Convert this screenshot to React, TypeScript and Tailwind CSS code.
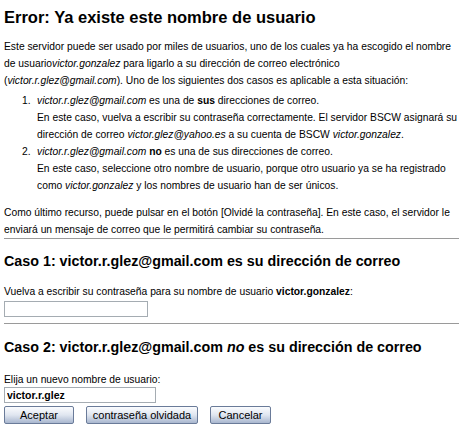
import React from "react";

const FONT = { fontFamily: '"Liberation Sans", Arial, sans-serif' };

function Button({ label, w }: { label: string; w: string }) {
  return (
    <button
      type="button"
      className={`${w} h-[18px] rounded-[2px] border border-[#6a7b99] bg-gradient-to-b from-[#fbfcfe] via-[#e0e6f0] to-[#a9b7cf] text-[11px] leading-[16px] text-black`}
    >
      {label}
    </button>
  );
}

export default function App() {
  return (
    <div className="h-[428px] w-[463px] overflow-hidden bg-white pl-[4px] pr-[2px] text-[10.3px] leading-[17px] text-black" style={FONT}>
      <h1 className="mt-[7px] text-[16.5px] font-bold leading-[20px]">
        Error: Ya existe este nombre de usuario
      </h1>

      <p className="mt-[11px]">
        Este servidor puede ser usado por miles de usuarios, uno de los cuales ya ha escogido el nombre de usuario
        <i>victor.gonzalez</i> para ligarlo a su dirección de correo electrónico (<i>victor.r.glez@gmail.com</i>). Uno de
        los siguientes dos casos es aplicable a esta situación:
      </p>

      <ol className="mt-[3px] pl-[33px]">
        <li className="flex">
          <span className="-ml-[15px] w-[15px] shrink-0">1.</span>
          <div>
            <i>victor.r.glez@gmail.com</i> es una de <b>sus</b> direcciones de correo.
            <br />
            En este caso, vuelva a escribir su contraseña correctamente. El servidor BSCW asignará su dirección de correo{" "}
            <i>victor.glez@yahoo.es</i> a su cuenta de BSCW <i>victor.gonzalez</i>.
          </div>
        </li>
        <li className="flex">
          <span className="-ml-[15px] w-[15px] shrink-0">2.</span>
          <div>
            <i>victor.r.glez@gmail.com</i> <b>no</b> es una de sus direcciones de correo.
            <br />
            En este caso, seleccione otro nombre de usuario, porque otro usuario ya se ha registrado como{" "}
            <i>victor.gonzalez</i> y los nombres de usuario han de ser únicos.
          </div>
        </li>
      </ol>

      <p className="mt-[10px]">
        Como último recurso, puede pulsar en el botón [Olvidé la contraseña]. En este caso, el servidor le enviará un
        mensaje de correo que le permitirá cambiar su contraseña.
      </p>

      <hr className="mr-[2px] mt-0 border-t border-[#9a9a9a]" />

      <h2 className="mt-[14px] text-[14.3px] font-bold leading-[17px]">
        Caso 1: victor.r.glez@gmail.com es su dirección de correo
      </h2>
      <div className="mt-[15px] leading-[14px]">
        Vuelva a escribir su contraseña para su nombre de usuario <b>victor.gonzalez</b>:
      </div>
      <input
        type="password"
        className="mt-[2px] block h-[16px] w-[144px] border border-[#a5acb2] bg-white"
      />

      <hr className="mr-[2px] mt-[6px] border-t border-[#9a9a9a]" />

      <h2 className="mt-[15px] text-[14.3px] font-bold leading-[17px]">
        Caso 2: victor.r.glez@gmail.com <i>no</i> es su dirección de correo
      </h2>
      <div className="mt-[17px] leading-[14px]">Elija un nuevo nombre de usuario:</div>
      <input
        type="text"
        defaultValue="victor.r.glez"
        className="block h-[16px] w-[152px] border border-[#a5acb2] bg-white px-[2px] text-[10.5px] font-bold leading-[14px] text-black"
      />
      <div className="mt-[3px] flex gap-[12px]">
        <Button label="Aceptar" w="w-[70px]" />
        <Button label="contraseña olvidada" w="w-[112px]" />
        <Button label="Cancelar" w="w-[61px]" />
      </div>
    </div>
  );
}
